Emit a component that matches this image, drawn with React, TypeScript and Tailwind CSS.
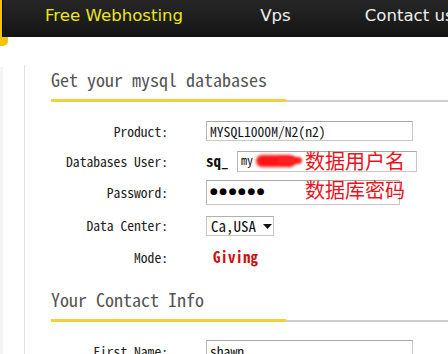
import React from "react";

const mono = { fontFamily: '"Noto Sans Mono CJK SC", "Liberation Mono", monospace' };
const cjk = { fontFamily: '"Noto Sans CJK SC", sans-serif' };

function Row({ label, h, children }: { label: string; h: string; children: React.ReactNode }) {
  return (
    <div className={`flex items-center ${h}`}>
      <div className="w-[117px] text-right text-[13.6px] text-[#222] whitespace-nowrap">{label}</div>
      <div className="relative ml-[38px] flex items-center">{children}</div>
    </div>
  );
}

function Box({ w, h, children }: { w: string; h: string; children?: React.ReactNode }) {
  return (
    <div
      className={`relative flex items-center ${w} ${h} border border-[#c8c8c8] border-t-[#a8a8a8] border-l-[#b8b8b8] bg-white pl-[3px] text-[13.6px] text-[#111] overflow-hidden whitespace-nowrap`}
    >
      {children}
    </div>
  );
}

function Heading({ text }: { text: string }) {
  return (
    <>
      <div className="h-[20px] leading-[20px] text-[18px] text-[#555] whitespace-nowrap">{text}</div>
      <div className="mt-[10px] flex items-end">
        <div className="w-[235px] h-[3px] bg-[#f1d03c]" />
        <div className="flex-1 h-[2px] bg-[#cfcfcf]" />
      </div>
    </>
  );
}

export default function App() {
  return (
    <div className="w-[448px] h-[354px] overflow-hidden bg-white" style={mono}>
      {/* top nav */}
      <div className="relative h-[46px]">
        <div className="absolute left-0 top-0 w-[8px] h-[46px] bg-[#f4c400] rounded-br-[5px]" />
        <div
          className="relative ml-[2px] h-[37px] bg-linear-to-b from-[#272727] to-[#141414] border-l border-[#0a0a0a] flex items-start pt-[4px] pl-[42px] text-[16.6px] whitespace-nowrap overflow-hidden"
          style={{ fontFamily: '"DejaVu Sans", Verdana, sans-serif' }}
        >
          <span className="text-[#ebe61e]">Free Webhosting</span>
          <span className="ml-[77px] text-[#eeeeee]">Vps</span>
          <span className="ml-[74px] text-[#eeeeee]">Contact us</span>
        </div>
      </div>

      <div className="flex h-[308px]">
        {/* left rail */}
        <div className="w-[25px] mt-[19px] border-r border-[#e2e2e2] flex">
          <div className="w-[3px] mt-[2px] bg-[#f3f3f3]" />
        </div>

        <div className="flex-1 pl-[26px] pt-[23px]">
          <Heading text="Get your mysql databases" />

          <div className="mt-[14px]">
            <Row label="Product:" h="h-[30px]">
              <Box w="w-[207px]" h="h-[20px]">MYSQL1000M/N2(n2)</Box>
            </Row>
            <Row label="Databases User:" h="h-[30px]">
              <span className="w-[31px] font-bold text-[15px] text-[#111]">sq_</span>
              <Box w="w-[180px]" h="h-[21px]">
                <span className="text-[12px] -mt-[3px]">my</span>
                <span className="absolute left-[18px] top-[3px] w-[40px] h-[12px] rounded-full bg-[#ff1414] blur-[1.5px]" />
                <span className="absolute left-[40px] top-[5px] w-[24px] h-[7px] rounded-full bg-[#ff2020] blur-[1px]" />
              </Box>
              <span
                className="absolute left-[99px] top-1/2 -translate-y-1/2 text-[20px] leading-none text-[#e8141e] whitespace-nowrap"
                style={cjk}
              >
                数据用户名
              </span>
            </Row>
            <Row label="Password:" h="h-[32px]">
              <Box w="w-[194px]" h="h-[25px]">
                <span className="text-[9px] tracking-[1.5px] text-black" style={{ fontFamily: '"DejaVu Sans", sans-serif' }}>
                  ●●●●●●
                </span>
              </Box>
              <span
                className="absolute left-[99px] top-0 text-[20px] leading-none text-[#e8141e] whitespace-nowrap"
                style={cjk}
              >
                数据库密码
              </span>
            </Row>
            <Row label="Data Center:" h="h-[34px]">
              <div className="mt-[2px] flex items-center w-[68px] h-[20px] border border-[#c8c8c8] border-t-[#b0b0b0] pl-[4px] text-[15px] text-[#111]">
                <span>Ca,USA</span>
                <svg className="ml-[7px]" width="9" height="5" viewBox="0 0 9 5">
                  <path d="M0 0H9L4.5 5Z" fill="#111" />
                </svg>
              </div>
            </Row>
            <Row label="Mode:" h="h-[30px]">
              <span className="ml-[7px] font-bold text-[15px] text-[#cc1111]">Giving</span>
            </Row>
          </div>

          <div className="mt-[17px]">
            <Heading text="Your Contact Info" />
          </div>

          <div className="mt-[14px]">
            <Row label="First Name:" h="h-[30px]">
              <Box w="w-[207px]" h="h-[22px]">shawn</Box>
            </Row>
          </div>
        </div>
      </div>
    </div>
  );
}
